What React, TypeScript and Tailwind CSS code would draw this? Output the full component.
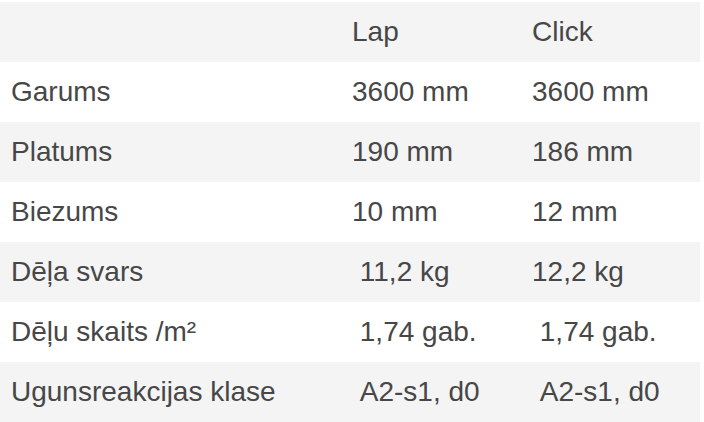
import React from "react";

const rows: [string, string, string][] = [
  ["Garums", "3600 mm", "3600 mm"],
  ["Platums", "190 mm", "186 mm"],
  ["Biezums", "10 mm", "12 mm"],
  ["Dēļa svars", "\u00a011,2 kg", "12,2 kg"],
  ["Dēļu skaits /m²", "\u00a01,74 gab.", "\u00a01,74 gab."],
  ["Ugunsreakcijas klase", "\u00a0A2-s1, d0", "\u00a0A2-s1, d0"],
];

export default function App() {
  return (
    <div className="w-[704px] h-[422px] bg-white pt-[2px] font-['Liberation_Sans',Arial,sans-serif] text-[28px] text-[#474747] leading-none">
      <table className="w-[700px] border-collapse table-fixed">
        <colgroup>
          <col className="w-[342px]" />
          <col className="w-[180px]" />
          <col className="w-[178px]" />
        </colgroup>
        <tbody>
          <tr className="h-[60px] bg-[#f4f4f4]">
            <td className="pl-[11px]"></td>
            <td className="pl-[10px]">Lap</td>
            <td className="pl-[10px]">Click</td>
          </tr>
          {rows.map((r, i) => (
            <tr key={i} className={`h-[60px] ${i % 2 === 0 ? "bg-white" : "bg-[#f4f4f4]"}`}>
              <td className="pl-[11px] whitespace-pre">{r[0]}</td>
              <td className="pl-[10px] whitespace-pre">{r[1]}</td>
              <td className="pl-[10px] whitespace-pre">{r[2]}</td>
            </tr>
          ))}
        </tbody>
      </table>
    </div>
  );
}
